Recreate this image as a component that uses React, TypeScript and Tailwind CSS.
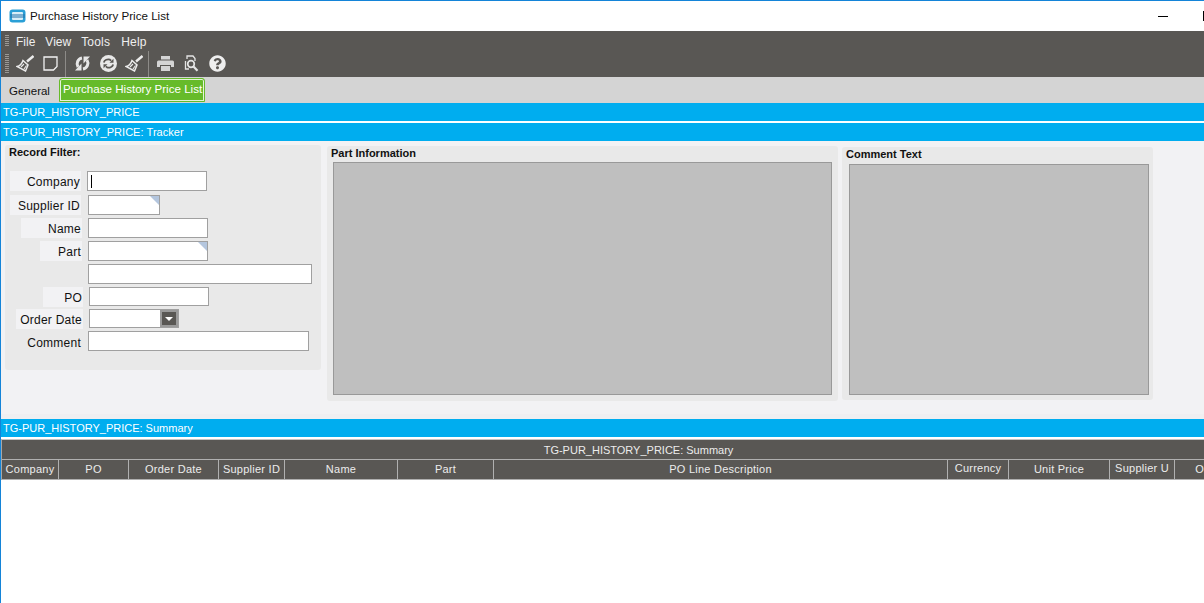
import type { ReactNode } from "react";
import { FaQuestionCircle } from "react-icons/fa";

const fieldRows = [
  { label: "Company", labelCls: "ml-[5px] w-[71px] bg-[#f2f2f4] pt-px", inputCls: "ml-[6px] w-[120px] h-[20px]", gap: "mt-0", caret: true },
  { label: "Supplier ID", labelCls: "ml-[5px] w-[71px] bg-[#f2f2f4] pt-px", inputCls: "ml-[7px] w-[72px] h-[20px]", gap: "mt-[4px]", corner: true },
  { label: "Name", labelCls: "ml-[16px] w-[61px] bg-[#f2f2f4] pt-px", inputCls: "ml-[6px] w-[120px] h-[20px]", gap: "mt-[3px]" },
  { label: "Part", labelCls: "ml-[35px] w-[42px] bg-[#f2f2f4] pt-px", inputCls: "ml-[6px] w-[120px] h-[20px]", gap: "mt-[3px]", corner: true },
  { label: "", labelCls: "ml-[35px] w-[42px]", inputCls: "ml-[6px] w-[224px] h-[20px]", gap: "mt-[3px]" },
  { label: "PO", labelCls: "ml-[38px] w-[40px] bg-[#f2f2f4] pt-px", inputCls: "ml-[6px] w-[120px] h-[19px]", gap: "mt-[3px]" },
  { label: "Order Date", labelCls: "ml-[11px] w-[67px] bg-[#f2f2f4] pt-px", inputCls: "ml-[6px] w-[90px] h-[19px]", gap: "mt-[2px]", combo: true },
  { label: "Comment", labelCls: "ml-[5px] w-[72px] pt-[3px]", inputCls: "ml-[6px] w-[221px] h-[20px]", gap: "mt-[2px]" },
];

const gridCols = [
  { name: "Company", cls: "w-[57px]" },
  { name: "PO", cls: "w-[70px]" },
  { name: "Order Date", cls: "w-[90px]" },
  { name: "Supplier ID", cls: "w-[66px]" },
  { name: "Name", cls: "w-[113px]" },
  { name: "Part", cls: "w-[96px]" },
  { name: "PO Line Description", cls: "w-[454px]" },
  { name: "Currency", cls: "w-[61px] pb-[3px]" },
  { name: "Unit Price", cls: "w-[101px]" },
  { name: "Supplier U", cls: "w-[65px] pb-[3px]" },
  { name: "Order Qty", cls: "w-[100px] pr-[8px]" },
];

function Broom() {
  return (
    <svg width="18" height="17" viewBox="0 0 18 17" fill="none" stroke="#ececec" strokeWidth="1.5">
      <path d="M17.5 1 11 6.5" strokeWidth="2.4" />
      <path d="M7 5.5 12 10 9.5 16 1 11.5C4 11 6 8.5 7 5.5Z" />
      <path d="M5 12 8 9M8 14 10.5 10.5" strokeWidth="1.1" />
    </svg>
  );
}

function StickyNote() {
  return (
    <svg className="mr-[2px]" width="15" height="15" viewBox="0 0 15 15" fill="none" stroke="#f2f2f2" strokeWidth="1.3">
      <path d="M1 1H14V10.5L10.5 14H1Z" />
    </svg>
  );
}

function SyncArrows() {
  return (
    <svg width="17" height="17" viewBox="0 0 17 17" fill="#e6e6e6">
      <path d="M8 3A6 6 0 0 0 4 12" fill="none" stroke="#e6e6e6" strokeWidth="3" />
      <polygon points="7.5,8.5 7.5,15.5 1,15.5" />
      <path d="M9 14A6 6 0 0 0 13 5" fill="none" stroke="#e6e6e6" strokeWidth="3" />
      <polygon points="9.5,8.5 9.5,1.5 16,1.5" />
    </svg>
  );
}

function CircleRefresh() {
  return (
    <svg width="17" height="17" viewBox="0 0 17 17">
      <circle cx="8.5" cy="8.5" r="8.5" fill="#e8e8e8" />
      <path d="M3.8 7.5C4.5 5 7.5 3.7 10 4.7L11.2 5.6" fill="none" stroke="#595754" strokeWidth="1.8" />
      <path d="M13.2 9.5C12.5 12 9.5 13.3 7 12.3L5.8 11.4" fill="none" stroke="#595754" strokeWidth="1.8" />
      <path d="M9.5 7.7H13.5V3.8ZM7.5 9.3H3.5V13.2Z" fill="#595754" />
    </svg>
  );
}

function Printer() {
  return (
    <svg width="17" height="15" viewBox="0 0 17 15" fill="#d4d4d4">
      <rect x="4" y="0" width="9" height="3.5" />
      <path d="M1.5 4.5H15.5Q17 4.5 17 6V11H14V9H3V11H0V6Q0 4.5 1.5 4.5Z" />
      <rect x="4" y="10" width="9" height="5" />
    </svg>
  );
}

function DocSearch() {
  return (
    <svg width="15" height="17" viewBox="0 0 15 17" fill="none" stroke="#e4e4e4" strokeWidth="1.3">
      <path d="M3 4V1H9L11 3.5V6M1.5 6V14H5" />
      <circle cx="7" cy="9" r="3.3" strokeWidth="1.7" />
      <path d="M9.5 11.5 13.5 15.8" strokeWidth="2.2" />
    </svg>
  );
}

function ToolCell({ children }: { children: ReactNode }) {
  return <div className="flex w-[26px] items-center justify-center">{children}</div>;
}

function Grip({ cls }: { cls: string }) {
  return (
    <div className={`w-[4px] bg-[repeating-linear-gradient(to_bottom,#9a9895_0_1px,transparent_1px_2px)] ${cls}`} />
  );
}

export default function App() {
  return (
    <div className="flex h-[603px] w-[1204px] flex-col overflow-hidden border-t border-l border-t-[#1484d8] border-l-[#1484d8] bg-white font-['Liberation_Sans',Arial,sans-serif] text-[12px] text-[#111]">
      {/* Title bar */}
      <header className="flex h-[30px] items-center pl-[8px]">
        <svg width="17" height="14" viewBox="0 0 17 14">
          <rect x="0.5" y="0.5" width="16" height="13" rx="3" fill="#2a9fd6" />
          <rect x="3" y="3" width="11" height="8" rx="1" fill="#d8eef8" />
          <rect x="1" y="5" width="15" height="4" fill="#1f6fa8" opacity="0.5" />
        </svg>
        <span className="ml-[4px] text-[11.6px]">Purchase History Price List</span>
        <div className="ml-auto mr-[35px] h-px w-[10px] bg-black" />
        <div className="h-[10px] w-px bg-black" />
      </header>

      {/* Menu + toolbar */}
      <div className="flex h-[46px] flex-col bg-[#595754] text-[#efefef]">
        <div className="flex h-[19px] items-center pl-[4px]">
          <Grip cls="h-[11px]" />
          <nav className="ml-[7px] flex gap-[10px] pt-[2px]">
            <span>File</span>
            <span>View</span>
            <span className="mr-px tracking-[0.2px]">Tools</span>
            <span className="tracking-[0.2px]">Help</span>
          </nav>
        </div>
        <div className="flex h-[27px] items-center pl-[4px]">
          <Grip cls="h-[20px]" />
          <div className="ml-[3px] flex h-[26px]">
            <ToolCell><Broom /></ToolCell>
            <ToolCell><StickyNote /></ToolCell>
            <div className="ml-px mr-[3px] h-[26px] w-px bg-[#8d8b88]" />
            <ToolCell><SyncArrows /></ToolCell>
            <ToolCell><CircleRefresh /></ToolCell>
            <ToolCell><Broom /></ToolCell>
            <div className="ml-px mr-[3px] h-[26px] w-px bg-[#8d8b88]" />
            <ToolCell><Printer /></ToolCell>
            <ToolCell><DocSearch /></ToolCell>
            <ToolCell><FaQuestionCircle size={17} color="#eeeeee" /></ToolCell>
          </div>
        </div>
      </div>

      {/* Tabs */}
      <div className="flex h-[26px] items-end bg-[#d4d4d4]">
        <div className="flex h-[24px] w-[58px] items-center pl-[8px] pt-[2px] text-[11.5px]">General</div>
        <div className="mb-px flex h-[24px] w-[146px] items-center rounded-t-[3px] border border-[#66bb2a] bg-[#66bb2a] pb-[2px] pl-[3px] text-[11.6px] whitespace-nowrap text-white shadow-[inset_0_0_0_1px_#e4f2da]">
          Purchase History Price List
        </div>
      </div>

      {/* Blue section bars */}
      <div className="flex h-[18px] items-center bg-[#00adef] pl-[2px] text-[11px] text-white">TG-PUR_HISTORY_PRICE</div>
      <div className="mt-[2px] flex h-[18px] items-center bg-[#00adef] pl-[2px] text-[11px] tracking-[0.05px] text-white">TG-PUR_HISTORY_PRICE: Tracker</div>

      {/* Tracker */}
      <section className="flex h-[278px] flex-col bg-[#f2f2f4]">
        <div className="flex h-[273px] items-start pl-[4px]">
          <div className="mt-[4px] h-[225px] w-[316px] rounded-[3px] bg-[#e9e9e9]">
            <div className="h-[26px] pl-[4px] pt-px text-[11px] leading-[12px] font-bold">Record Filter:</div>
            {fieldRows.map((row, i) => (
              <div key={i} className={`flex ${row.gap}`}>
                <div className={`flex h-[20px] items-center justify-end pr-px tracking-[0.25px] ${row.labelCls}`}>{row.label}</div>
                <div className={`relative flex items-center border border-[#a0a0a0] bg-white ${row.inputCls}`}>
                  {row.caret && <div className="ml-[3px] h-[13px] w-px bg-black" />}
                  {row.corner && (
                    <svg className="absolute top-0 right-0" width="9" height="9" viewBox="0 0 9 9">
                      <polygon points="0,0 9,0 9,9" fill="#b4c6de" />
                    </svg>
                  )}
                  {row.combo && (
                    <div className="ml-auto flex h-full w-[18px] items-center justify-center border-[2px] border-[#9a9a9a] bg-[#595754]">
                      <svg width="8" height="4" viewBox="0 0 8 4">
                        <polygon points="0,0 8,0 4,4" fill="#ffffff" />
                      </svg>
                    </div>
                  )}
                </div>
              </div>
            ))}
          </div>

          <div className="ml-[6px] mt-[5px] h-[255px] w-[511px] rounded-[3px] bg-[#e9e9e9] px-[6px]">
            <div className="-ml-[2px] h-[16px] pt-px text-[11px] leading-[12px] font-bold">Part Information</div>
            <div className="h-[233px] border border-[#999999] bg-[#bfbfbf]" />
          </div>

          <div className="ml-[4px] mt-[6px] h-[253px] w-[311px] rounded-[3px] bg-[#e9e9e9] pl-[7px] pr-[4px]">
            <div className="-ml-[3px] h-[17px] pt-px text-[11px] leading-[12px] font-bold">Comment Text</div>
            <div className="h-[231px] border border-[#999999] bg-[#bfbfbf]" />
          </div>
        </div>
        <div className="h-[5px] bg-[#efeff1]" />
      </section>

      {/* Summary */}
      <div className="flex h-[18px] items-center bg-[#00adef] pl-[2px] text-[11px] text-white">TG-PUR_HISTORY_PRICE: Summary</div>
      <div className="mt-[2px] w-[1274px] shrink-0 border-t border-t-[#c4c4c4] border-l border-l-[#a8a8a8] bg-[#595754] text-[11px] text-[#ececec]">
        <div className="flex h-[20px] items-center justify-center border-b border-[#b0b0b0] pt-[2px]">TG-PUR_HISTORY_PRICE: Summary</div>
        <div className="flex h-[20px] border-b border-[#b0b0b0] tracking-[0.25px]">
          {gridCols.map((col) => (
            <div key={col.name} className={`flex shrink-0 items-center justify-center border-r border-[#b0b0b0] ${col.cls}`}>
              {col.name}
            </div>
          ))}
        </div>
      </div>
    </div>
  );
}
